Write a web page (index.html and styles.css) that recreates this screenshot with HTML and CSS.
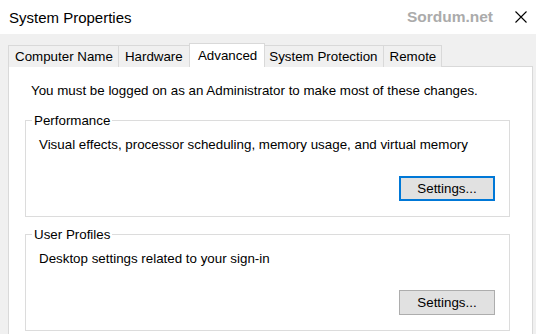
FILE: index.html
```html
<!DOCTYPE html>
<html lang="en">
<head>
  <meta charset="UTF-8" />
  <title>System Properties</title>
  <link rel="stylesheet" href="styles.css">
</head>
<body>

  <header class="titlebar">
    <span class="title">System Properties</span>
    <span class="watermark">Sordum.net</span>
    <button class="close" aria-label="Close">
      <svg width="12" height="12" viewBox="0 0 12 12"><path d="M0.5 0.5 L11.5 11.5 M11.5 0.5 L0.5 11.5" stroke="#000" stroke-width="1.1" fill="none"/></svg>
    </button>
  </header>

  <div class="dialog">
    <nav class="tabs">
      <a class="tab">Computer Name</a>
      <a class="tab">Hardware</a>
      <a class="tab active">Advanced</a>
      <a class="tab">System Protection</a>
      <a class="tab">Remote</a>
    </nav>

    <section class="panel">
      <p class="notice">You must be logged on as an Administrator to make most of these changes.</p>

      <fieldset class="group">
        <legend>Performance</legend>
        <p>Visual effects, processor scheduling, memory usage, and virtual memory</p>
        <div class="group-buttons">
          <button class="btn default">Settings...</button>
        </div>
      </fieldset>

      <fieldset class="group">
        <legend>User Profiles</legend>
        <p>Desktop settings related to your sign-in</p>
        <div class="group-buttons">
          <button class="btn">Settings...</button>
        </div>
      </fieldset>
    </section>
  </div>

</body>
</html>
```

FILE: styles.css
```css
* { box-sizing: border-box; }

body {
  margin: 0;
  font-family: 'Liberation Sans', Arial, sans-serif;
  font-size: 13.35px;
  color: #000;
  background-color: #f0f0f0;
  height: 334px;
  overflow: hidden;
}

.titlebar {
  height: 34px;
  background-color: #ffffff;
  display: flex;
  align-items: center;
  padding-left: 9px;
}

.title {
  font-size: 15px;
  flex-grow: 1;
}

.watermark {
  font-weight: bold;
  font-size: 15.5px;
  color: #ababab;
  margin-right: 16px;
}

.close {
  border: none;
  background: none;
  padding: 0;
  width: 24px;
  margin-right: 3px;
  display: flex;
  justify-content: center;
}

.dialog {
  padding: 9px 3px 0 8px;
}

.tabs {
  display: flex;
  align-items: flex-end;
  height: 24px;
}

.tab {
  height: 22px;
  line-height: 21px;
  padding: 0 5px 0 6px;
  background-color: #f0f0f0;
  border: 1px solid #d9d9d9;
  border-bottom: none;
  border-left: none;
}

.tab:first-child {
  border-left: 1px solid #d9d9d9;
}

.tab.active {
  height: 24px;
  line-height: 23px;
  margin: 0 -2px 0 -1px;
  padding: 0 7px 0 8px;
  background-color: #ffffff;
  border-left: 1px solid #d9d9d9;
  position: relative;
  z-index: 1;
}

.tabs .tab:nth-child(2) { width: 71px; }

.panel {
  background-color: #ffffff;
  border: 1px solid #d9d9d9;
  margin-top: -1px;
  height: 300px;
  padding: 16px 22px 0 16px;
}

.notice {
  margin: 0 0 15px 6px;
}

.group {
  border: 1px solid #dcdcdc;
  margin: 0 0 10px 0;
  padding: 9px 14px 15px 13px;
  width: 485px;
}

.group legend {
  padding: 0 2px;
  margin-left: -7px;
}

.group p {
  margin: 0;
}

.group-buttons {
  display: flex;
  justify-content: flex-end;
  margin-top: 24px;
}

.btn {
  width: 96px;
  height: 25px;
  font-family: inherit;
  font-size: 13.35px;
  background-color: #e1e1e1;
  border: 1px solid #adadad;
  padding: 0;
}

.btn.default {
  border: 2px solid #0078d7;
}
```
